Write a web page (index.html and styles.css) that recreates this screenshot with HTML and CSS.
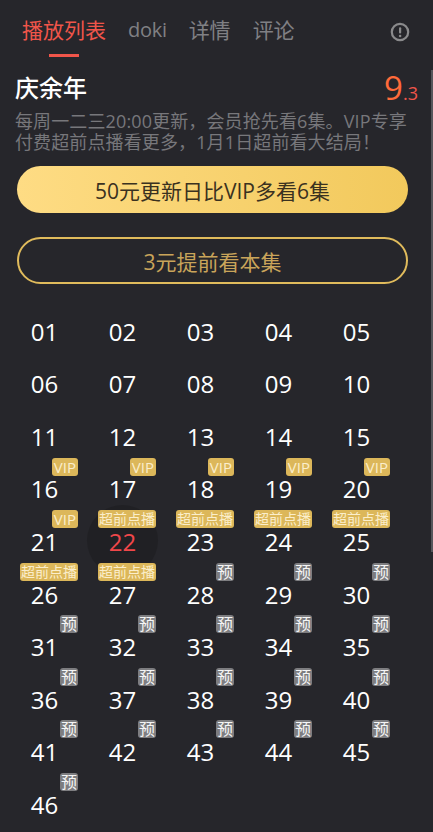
FILE: index.html
```html
<!DOCTYPE html>
<html lang="zh">
<head>
<meta charset="utf-8">
<title>庆余年</title>
<link rel="stylesheet" href="styles.css">
</head>
<body>
<div class="scrollbar"></div>
<nav class="tabs">
  <a class="tab active">播放列表</a>
  <a class="tab latin">doki</a>
  <a class="tab">详情</a>
  <a class="tab">评论</a>
  <svg class="info" viewBox="0 0 20 20" width="20" height="20"><circle cx="10" cy="10" r="8.2" fill="none" stroke="#8a8a8c" stroke-width="2.2"/><rect x="9" y="5.2" width="2.2" height="6.4" rx="1" fill="#8a8a8c"/><circle cx="10.1" cy="14" r="1.3" fill="#8a8a8c"/></svg>
</nav>
<header class="head">
  <h1 class="title">庆余年</h1>
  <div class="score"><span class="big">9</span><span class="small">.3</span></div>
</header>
<p class="desc">每周一二三20:00更新，会员抢先看6集。VIP专享付费超前点播看更多，1月1日超前看大结局！</p>
<button class="btn solid">50元更新日比VIP多看6集</button>
<button class="btn outline">3元提前看本集</button>
<section class="grid">
  <div class="ep">01</div><div class="ep">02</div><div class="ep">03</div><div class="ep">04</div><div class="ep">05</div>
  <div class="ep">06</div><div class="ep">07</div><div class="ep">08</div><div class="ep">09</div><div class="ep">10</div>
  <div class="ep">11</div><div class="ep">12</div><div class="ep">13</div><div class="ep">14</div><div class="ep">15</div>
  <div class="ep"><i class="tag vip latin-tag">VIP</i>16</div><div class="ep"><i class="tag vip latin-tag">VIP</i>17</div><div class="ep"><i class="tag vip latin-tag">VIP</i>18</div><div class="ep"><i class="tag vip latin-tag">VIP</i>19</div><div class="ep"><i class="tag vip latin-tag">VIP</i>20</div>
  <div class="ep"><i class="tag vip latin-tag">VIP</i>21</div><div class="ep current"><i class="tag vip">超前点播</i>22</div><div class="ep"><i class="tag vip">超前点播</i>23</div><div class="ep"><i class="tag vip">超前点播</i>24</div><div class="ep"><i class="tag vip">超前点播</i>25</div>
  <div class="ep"><i class="tag vip">超前点播</i>26</div><div class="ep"><i class="tag vip">超前点播</i>27</div><div class="ep"><i class="tag pre">预</i>28</div><div class="ep"><i class="tag pre">预</i>29</div><div class="ep"><i class="tag pre">预</i>30</div>
  <div class="ep"><i class="tag pre">预</i>31</div><div class="ep"><i class="tag pre">预</i>32</div><div class="ep"><i class="tag pre">预</i>33</div><div class="ep"><i class="tag pre">预</i>34</div><div class="ep"><i class="tag pre">预</i>35</div>
  <div class="ep"><i class="tag pre">预</i>36</div><div class="ep"><i class="tag pre">预</i>37</div><div class="ep"><i class="tag pre">预</i>38</div><div class="ep"><i class="tag pre">预</i>39</div><div class="ep"><i class="tag pre">预</i>40</div>
  <div class="ep"><i class="tag pre">预</i>41</div><div class="ep"><i class="tag pre">预</i>42</div><div class="ep"><i class="tag pre">预</i>43</div><div class="ep"><i class="tag pre">预</i>44</div><div class="ep"><i class="tag pre">预</i>45</div>
  <div class="ep"><i class="tag pre">预</i>46</div>
</section>
</body>
</html>
```
FILE: styles.css
```css
* { box-sizing: border-box; }
html, body { margin: 0; height: 832px; overflow: hidden; }
body {
  position: relative;
  background: #26262b;
  font-family: "Open Sans", "Noto Sans CJK SC", sans-serif;
  color: #fff;
  padding: 0 16px 0 15px;
}
.scrollbar { position: absolute; right: 0; top: 70px; width: 2px; height: 482px; background: #55555a; }
.tabs { display: flex; align-items: center; height: 56px; position: relative; gap: 22px; padding-left: 7px; padding-top: 6px; }
.tab { font-size: 21px; color: #808084; line-height: 28px; height: 50px; position: relative; padding-top: 10px; }
.latin { font-size: 20px; letter-spacing: -0.3px; }
.tab.active { color: #f0554a; }
.tab.active::after { content: ""; position: absolute; left: 27px; bottom: -1px; width: 30px; height: 3px; background: #f0554a; }
.info { position: absolute; right: 7px; top: 22px; }
.head { display: flex; justify-content: space-between; align-items: center; height: 54px; padding-top: 10px; }
.title { margin: 0; font-size: 24px; font-weight: 500; line-height: 34px; }
.score { line-height: 44px; height: 44px; margin-right: -1px; }
.big { font-size: 33px; color: #ff6a3a; }
.small { font-size: 18px; color: #f0554a; }
.desc { margin: 1px 0 0; font-size: 18px; line-height: 21px; height: 44px; color: #77777b; width: 398px; letter-spacing: 0.12px; }
.btn { display: block; width: 391px; height: 47px; margin-left: 2px; border-radius: 24px; font-family: inherit; font-size: 21px; padding: 0; }
.solid { margin-top: 11px; border: 0; color: #3a3120; background: linear-gradient(90deg, #fedc84, #f2c95c); }
.outline { margin-top: 24px; background: transparent; border: 2px solid #e0bb5c; color: #c9a45a; }
.grid { display: grid; grid-template-columns: repeat(5, 78px); grid-auto-rows: 52.55px; margin: 15px 0 0 -9.5px; }
.ep { position: relative; display: flex; justify-content: center; align-items: center; font-size: 24px; padding-top: 12px; height: 52.55px; }
.current { color: #f0474a; }
.current::before { content: ""; position: absolute; left: 3.5px; top: -4px; width: 71px; height: 71px; border-radius: 50%; background: #202024; z-index: -1; }
.tag { position: absolute; top: 1px; right: 5.5px; height: 18px; line-height: 18px; padding: 0 1px; font-size: 14px; font-style: normal; border-radius: 3px; color: #fbeecb; }
.latin-tag { font-size: 15px; padding: 0 2px; }
.vip { background: #dcb75a; }
.pre { background: #7d7d80; color: #f5f5f5; font-size: 16px; }
```
